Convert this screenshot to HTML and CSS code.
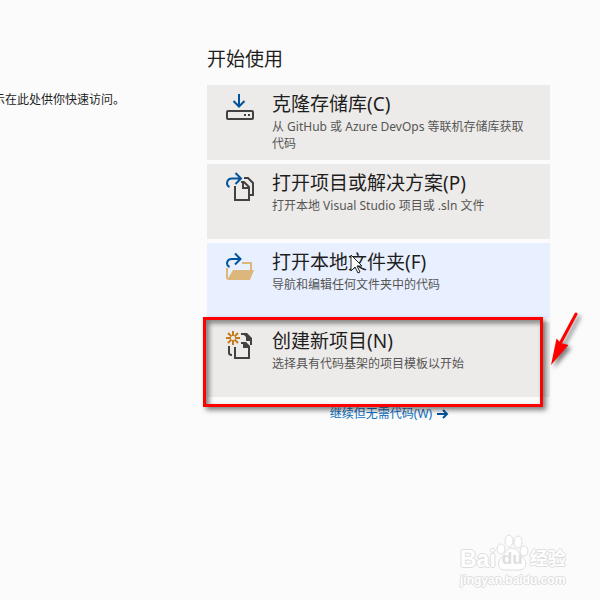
FILE: index.html
```html
<!DOCTYPE html>
<html lang="zh-CN">

<head>
  <meta charset="UTF-8">
  <meta name="viewport" content="width=device-width, initial-scale=1.0">
  <title>开始使用</title>
  <link rel="stylesheet" href="styles.css">
</head>

<body>
  <div class="page">
    <div class="recent">
      <p class="recent-text">示在此处供你快速访问。</p>
    </div>

    <main class="start">
      <h1>开始使用</h1>
      <div class="actions">
        <button type="button" class="action">
          <svg class="icon" width="30" height="32" viewBox="0 0 30 32" fill="none" aria-hidden="true">
            <path d="M14 2v12M8.500 9L14 14.500 19.500 9" stroke="#00539c" stroke-width="2"/>
            <rect x="2" y="19" width="26" height="8" rx="1" stroke="#424242" stroke-width="2"/>
            <path d="M19 22h2v2h-2zM23 22h2v2h-2z" fill="#424242"/>
          </svg>
          <span class="text">
            <span class="title">克隆存储库(C)</span>
            <span class="desc">从 GitHub 或 Azure DevOps 等联机存储库获取代码</span>
          </span>
        </button>

        <button type="button" class="action">
          <svg class="icon" width="30" height="32" viewBox="0 0 30 32" fill="none" aria-hidden="true">
            <path d="M10 15v14h14V16l-5-5h-3" stroke="#424242" stroke-width="2"/>
            <path d="M18 11v6h6" stroke="#424242" stroke-width="2"/>
            <path d="M19 7h4l5 5v12h-3" stroke="#424242" stroke-width="2"/>
            <path d="M4.500 16C.500 14 1.500 7.500 7 7.500h9M10.500 2l5.500 5.500-5.500 5.500" stroke="#00539c" stroke-width="2"/>
          </svg>
          <span class="text">
            <span class="title">打开项目或解决方案(P)</span>
            <span class="desc">打开本地 Visual Studio 项目或 .sln 文件</span>
          </span>
        </button>

        <button type="button" class="action active">
          <svg class="icon" width="30" height="32" viewBox="0 0 30 32" fill="none" aria-hidden="true">
            <path d="M2 18v11M17 13h9v8" stroke="#dcb67a" stroke-width="2"/>
            <path d="M8 20h21l-4 10H2z" fill="#dcb67a"/>
            <path d="M4.500 17C.500 15 1.500 9 7 9h8M10 3.500l5.500 5.500-5.500 5.500" stroke="#00539c" stroke-width="2"/>
          </svg>
          <span class="text">
            <span class="title">打开本地文件夹(F)</span>
            <span class="desc">导航和编辑任何文件夹中的代码</span>
          </span>
        </button>

        <button type="button" class="action">
          <svg class="icon" width="30" height="32" viewBox="0 0 30 32" fill="none" aria-hidden="true">
            <path d="M10 18v11h14V18l-4-4h-4" stroke="#424242" stroke-width="2"/>
            <path d="M18 13h3l4 4v2h-7z" fill="#424242"/>
            <path d="M4 17v7q0 2 3 2" stroke="#424242" stroke-width="2"/>
            <path d="M16 4h6l5 5v7h-2v-4h-4V8l-2-2h-3z" fill="#424242"/>
            <path d="M8 2v5M8 11v5M1 9h5M10 9h5M3 4l3.500 3.500M9.500 10.500L13 14M3 14l3.500-3.500M9.500 7.500L13 4" stroke="#c27d1a" stroke-width="2"/>
          </svg>
          <span class="text">
            <span class="title">创建新项目(N)</span>
            <span class="desc">选择具有代码基架的项目模板以开始</span>
          </span>
        </button>
      </div>

      <a class="skip" href="#">继续但无需代码(W)
        <svg width="12" height="12" viewBox="0 0 12 12" fill="none" aria-hidden="true">
          <path d="M0 6h10M6 2l4 4-4 4" stroke="#00539c" stroke-width="2"/>
        </svg>
      </a>
    </main>
  </div>

  <!-- 标注 -->
  <div class="highlight"></div>
  <svg class="pointer-arrow" width="40" height="64" viewBox="0 0 40 64" aria-hidden="true">
    <path d="M27 6L12 34" stroke="#f00" stroke-width="3" stroke-linecap="round"/>
    <path d="M2 57L7.500 30.500 12 35 19.500 37z" fill="#f00"/>
  </svg>
  <svg class="cursor" width="13" height="21" viewBox="0 0 13 21" aria-hidden="true">
    <path d="M1 1v16l4-4 3 6 2-1-3-6h5z" fill="#fff" stroke="#222" stroke-width="1"/>
  </svg>

  <div class="watermark">
    <div class="brand">
      <span>Bai</span>
      <span class="paw">
        <svg width="34" height="38" viewBox="0 0 34 38" aria-hidden="true">
          <g fill="#fff" stroke="#dedede" stroke-width="1">
            <ellipse cx="5" cy="15" rx="4" ry="5"/>
            <ellipse cx="13" cy="7" rx="4" ry="6"/>
            <ellipse cx="22" cy="8" rx="4" ry="6"/>
            <ellipse cx="28" cy="17" rx="4" ry="5"/>
            <path d="M16 14c5 0 7 6 11 10 5 4 3 12-3 12H8c-6 0-7-8-3-12s6-10 11-10z"/>
          </g>
        </svg>
        <span class="du">du</span>
      </span>
      <span class="jy">经验</span>
    </div>
    <div class="site">jingyan.baidu.com</div>
  </div>
</body>

</html>
```
FILE: styles.css
```css
* {
  box-sizing: border-box;
}

body {
  margin: 0;
  min-height: 100vh;
  position: relative;
  overflow: hidden;
  background-color: #fbfbfb;
  color: #1e1e1e;
  font-family: "Noto Sans", "Noto Sans CJK SC", sans-serif;
  font-size: 12px;
}

.page {
  display: grid;
  grid-template-columns: 207px 1fr;
  padding: 45px 50px 0 0;
}

.recent {
  display: flex;
  justify-content: flex-end;
  overflow: hidden;
  padding: 46px 82px 0 0;
}

.recent-text {
  margin: 0;
  line-height: 17px;
  white-space: nowrap;
}

.start {
  display: flex;
  flex-direction: column;
}

h1 {
  margin: 0 0 12px;
  font-size: 19px;
  font-weight: normal;
  line-height: 28px;
}

.actions {
  display: flex;
  flex-direction: column;
  gap: 4px;
}

.action {
  display: flex;
  align-items: flex-start;
  gap: 17px;
  width: 100%;
  min-height: 75px;
  padding: 7px 18px 8px;
  border: none;
  background-color: #edebe9;
  color: #1e1e1e;
  font: inherit;
  text-align: left;
  cursor: pointer;
}

.action:hover,
.active {
  background-color: #e8efff;
}

.icon {
  flex: none;
}

.text {
  display: flex;
  flex-direction: column;
  gap: 2px;
}

.title {
  font-size: 19px;
  line-height: 24px;
}

.desc {
  color: #555;
  line-height: 17px;
}

.skip {
  display: flex;
  align-items: center;
  align-self: center;
  gap: 5px;
  margin-top: 8px;
  padding-left: 22px;
  color: #0e70c0;
  line-height: 17px;
  text-decoration: none;
}

.highlight {
  position: absolute;
  top: 317px;
  left: 203px;
  width: 340px;
  height: 90px;
  border: 3px solid #f00;
  box-shadow: 3px 3px 5px rgba(0, 0, 0, 0.5), inset 3px 3px 5px rgba(0, 0, 0, 0.5);
}

.pointer-arrow {
  position: absolute;
  top: 308px;
  left: 549px;
  overflow: visible;
  filter: drop-shadow(3px 3px 2px rgba(0, 0, 0, 0.5));
}

.cursor {
  position: absolute;
  top: 254px;
  left: 350px;
}

.watermark {
  position: absolute;
  top: 534px;
  left: 460px;
  color: #fff;
  font-family: "Liberation Sans", "Noto Sans CJK SC", sans-serif;
  font-weight: bold;
  text-shadow: 1px 0 #dedede, -1px 0 #dedede, 0 1px #dedede, 0 -1px #dedede;
}

.brand {
  display: flex;
  align-items: flex-end;
  height: 38px;
  font-size: 23px;
  line-height: 26px;
}

.paw {
  position: relative;
  height: 38px;
}

.du {
  position: absolute;
  left: 6px;
  bottom: 0;
  font-size: 17px;
  color: #dedede;
  text-shadow: none;
}

.jy {
  font-size: 18px;
}

.site {
  font-size: 12px;
  line-height: 16px;
}
```
